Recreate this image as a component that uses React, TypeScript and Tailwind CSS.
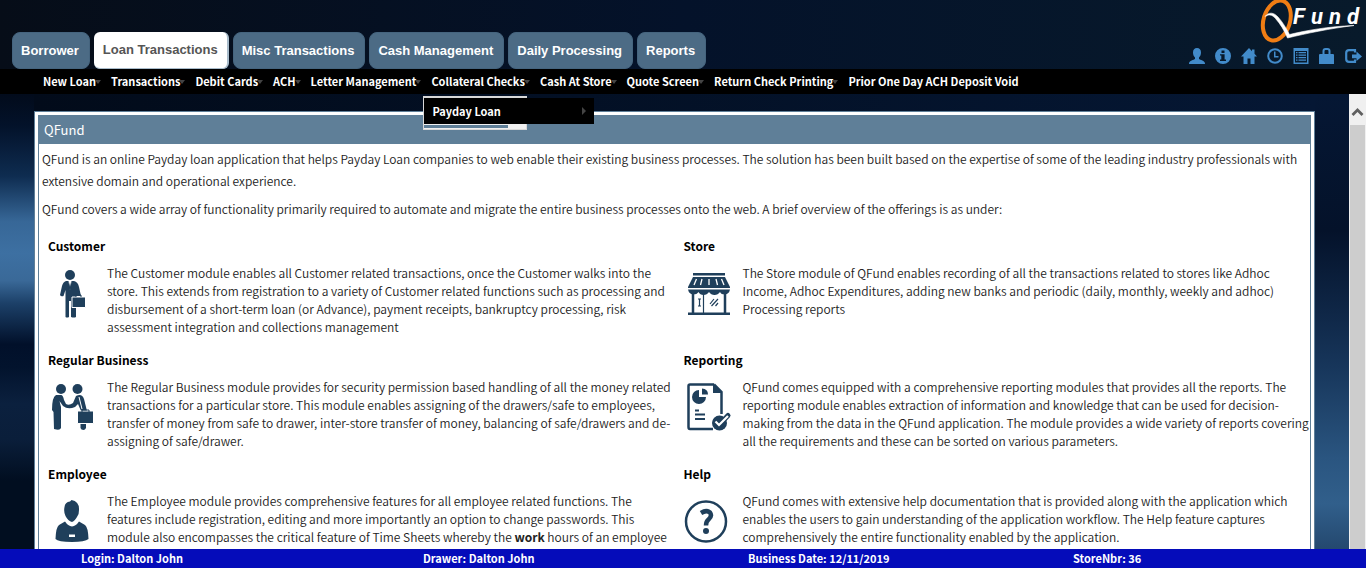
import React from "react";

const INK = "#1f3f5b";

const tabs = ["Borrower", "Loan Transactions", "Misc Transactions", "Cash Management", "Daily Processing", "Reports"];

const menu = [
  "New Loan",
  "Transactions",
  "Debit Cards",
  "ACH",
  "Letter Management",
  "Collateral Checks",
  "Cash At Store",
  "Quote Screen",
  "Return Check Printing",
  "Prior One Day ACH Deposit Void",
];

function Logo() {
  return (
    <svg width="106" height="44" viewBox="0 0 106 44" role="img" aria-label="QFund">
      <ellipse cx="16.800" cy="20.500" rx="13.200" ry="20.500" transform="rotate(17 16.800 20.500)" fill="none" stroke="#f07d14" strokeWidth="4" />
      <path d="M5 16.500C9 11.500 14 12.500 18 17C23 22.500 26 28 29.500 34.500C46 30.500 68 26.500 94 25.500C70 28.500 46 33.500 27.500 38C24.500 31 20.500 24 15.500 18.500C12 14.500 9 14 5 16.500Z" fill="#fff" stroke="#fff" strokeWidth="0.600" />
      <g fill="#fff" fontSize="22" fontWeight="700" fontStyle="italic" fontFamily="Roboto,sans-serif">
        <text x="33" y="24">F</text>
        <text x="51" y="24">u</text>
        <text x="69" y="24">n</text>
        <text x="87" y="24">d</text>
      </g>
    </svg>
  );
}

const tools: { name: string; art: React.ReactNode }[] = [
  { name: "Profile", art: <path d="M8 0C5.500 0 4 1.600 4 4.400C4 6.500 4.800 8.300 6 9.400V11C5 12 0 12.500 0 15.500V16H16V15.500C16 12.500 11 12 10 11V9.400C11.200 8.300 12 6.500 12 4.400C12 1.600 10.500 0 8 0Z" /> },
  { name: "Information", art: <path fillRule="evenodd" d="M8 0A8 8 0 1 1 8 16A8 8 0 0 1 8 0ZM6.500 2.500V5H9.500V2.500ZM5 6.200V7.500H6.300V11.500H5V13H11V11.500H9.600V6.200Z" /> },
  { name: "Home", art: <path d="M8 0L0 8.500H2.500V16H6.500V10.500H9.500V16H13.500V8.500H16L13.500 5.700V1.500H11V3.200Z" /> },
  { name: "Time", art: <><circle cx="8" cy="8" r="6.800" fill="none" stroke="currentColor" strokeWidth="2" /><path d="M7 3.500H8.500V8H11.500V9.500H7Z" /></> },
  { name: "List", art: <path fillRule="evenodd" d="M0.500 0H15.500V16H0.500ZM2 3V14.500H14V3ZM3 4H4.500V5.300H3ZM5.500 4H13V5.300H5.500ZM3 6.500H4.500V7.800H3ZM5.500 6.500H13V7.800H5.500ZM3 9H4.500V10.300H3ZM5.500 9H13V10.300H5.500ZM3 11.500H4.500V12.800H3ZM5.500 11.500H13V12.800H5.500Z" /> },
  { name: "Lock", art: <path fillRule="evenodd" d="M3.500 6V3Q3.500 0 6.500 0H8.500Q11.500 0 11.500 3V6H14Q15 6 15 7V16H0V7Q0 6 1 6ZM5.500 6H9.500V3.200Q9.500 2 8.500 2H6.500Q5.500 2 5.500 3.200Z" /> },
  { name: "Log out", art: <><path d="M10 4.500V2.200H4Q1.200 2.200 1.200 5V11Q1.200 13.800 4 13.800H10V11.500" fill="none" stroke="currentColor" strokeWidth="2.200" /><path d="M7 6.500H11.500V3.500L17 8.500L11.500 13V10.300H7Z" /></> },
];

function CustomerArt() {
  return (
    <svg width="48" height="48" viewBox="0 -1 48 48" overflow="visible" fill={INK} aria-hidden="true">
      <circle cx="22" cy="5" r="5" />
      <path d="M18 11H26Q30 12 31 17L33 26H28V47Q26 48 23 47V31H21V47Q19 48 17.500 47V20L15.500 26Q13 27 12 25L14 16Q15 12 18 11Z" />
      <path d="M20.500 11L22 20L23.500 11Z" fill="#fff" />
      <path d="M22 12L20.800 18L22 20.500L23.200 18Z" />
      <path d="M24 27H37.500V37.500H24Z" stroke="#fff" strokeWidth="1" />
      <path d="M28 27V25H33V27" fill="none" stroke={INK} strokeWidth="1" />
    </svg>
  );
}

function BusinessArt() {
  return (
    <svg width="48" height="48" viewBox="0 -1 48 48" fill={INK} aria-hidden="true">
      <circle cx="13" cy="5" r="5" />
      <circle cx="29.500" cy="5" r="5" />
      <path d="M8 11H13Q15 11 16 16L18 20Q21 22 25 19L28 12Q34 9 36 15L39 27H33L30 20L27 23Q20 26 15 22L11.500 17L13 23V44Q12 47 6 45L5.500 28L4 26Q4 13 8 11Z" />
      <path d="M31 13L34 25" stroke="#fff" strokeWidth="1" />
      <path d="M29.500 27H45.500V39.500H29.500Z" stroke="#fff" strokeWidth="1" />
      <path d="M34 28V26H41V28" fill="none" stroke={INK} />
      <path d="M32.500 40H38V44Q37 46 35.500 46Q33 46 32.500 44Z" />
    </svg>
  );
}

function EmployeeArt() {
  return (
    <svg width="48" height="48" viewBox="0 -3 48 48" fill={INK} aria-hidden="true">
      <path d="M23.500 0Q31.500 1.500 31 10Q31 14 29.500 16Q27 21 24 22Q20 21 17.500 16Q15.500 12 16.500 7Q17 2 22 1.500Z" />
      <path d="M17 21.500Q20 26 24 26.500Q28 26 31 21.500L37 25Q40 27 40.500 39Q37 42 24 42Q10 42 7.500 39Q8 27 11 25Z" />
      <path d="M21 34.500H27V37H21Z" fill="#fff" />
    </svg>
  );
}

function StoreArt() {
  return (
    <svg width="48" height="48" viewBox="0 -1 48 48" fill={INK} aria-hidden="true">
      <path d="M9 3H41V5.500H9Z" />
      <path d="M9 7H41L46 17V18H4V17Z" />
      <path d="M12.500 9L10 15M18 9L16.500 15M25 9V15M32 9L33.500 15M37.500 9L40 15" stroke="#fff" strokeWidth="1.300" />
      <path d="M4 19.500H46Q45 24 41 24.500Q37 24.500 36 22Q34 25 30.500 25Q27 25 25 22Q23 25 19.500 25Q16 25 14.500 22Q13 24.500 9 24.500Q5 24 4 19.500Z" />
      <path d="M9 24V43M41 24V43" stroke={INK} strokeWidth="2.500" />
      <path d="M19.500 24V43M14 29H17M15.500 29V36M14 36H17M26 34L30 29M27.500 36L34 29M31.500 36L34 33" stroke={INK} strokeWidth="1.200" fill="none" />
      <path d="M4 42.500H46V45H4Z" />
    </svg>
  );
}

function ReportArt() {
  return (
    <svg width="48" height="48" viewBox="0 0 48 48" fill={INK} aria-hidden="true">
      <path d="M30 1.500H6Q4.500 1.500 4.500 3V44Q4.500 46 6 46H29M30 1.500L37.500 9V31" fill="none" stroke={INK} strokeWidth="2.500" />
      <path d="M29 1V10H38Z" />
      <path d="M15 7V14H22A7 7 0 1 1 15 7Z" />
      <path d="M18 5.500V11.500H24Q24 6 18 5.500Z" />
      <path d="M11 27.500H15M11 31.500H21M11 36H21" stroke={INK} strokeWidth="2" />
      <circle cx="35.500" cy="40" r="7.500" />
      <path d="M31.500 38.500L35 42L44 32.500" fill="none" stroke={INK} strokeWidth="5" strokeLinecap="round" />
      <path d="M31.500 38.500L35 42L44 33" fill="none" stroke="#fff" strokeWidth="2.200" />
    </svg>
  );
}

function HelpArt() {
  return (
    <svg width="48" height="48" viewBox="0 -2 48 48" aria-hidden="true">
      <circle cx="22" cy="22.500" r="20" fill="none" stroke={INK} strokeWidth="2.500" />
      <path d="M17 14Q22.500 10.500 26 13.500Q28.500 17 24.500 20.500Q22 22.500 22 26.500" fill="none" stroke={INK} strokeWidth="4.500" />
      <circle cx="22" cy="32" r="3" fill={INK} />
    </svg>
  );
}

const modules: { title: string; art: React.ReactNode; text: React.ReactNode }[] = [
  { title: "Customer", art: <CustomerArt />, text: "The Customer module enables all Customer related transactions, once the Customer walks into the store. This extends from registration to a variety of Customer related functions such as processing and disbursement of a short-term loan (or Advance), payment receipts, bankruptcy processing, risk assessment integration and collections management" },
  { title: "Store", art: <StoreArt />, text: "The Store module of QFund enables recording of all the transactions related to stores like Adhoc Income, Adhoc Expenditures, adding new banks and periodic (daily, monthly, weekly and adhoc) Processing reports" },
  { title: "Regular Business", art: <BusinessArt />, text: "The Regular Business module provides for security permission based handling of all the money related transactions for a particular store. This module enables assigning of the drawers/safe to employees, transfer of money from safe to drawer, inter-store transfer of money, balancing of safe/drawers and de-assigning of safe/drawer." },
  { title: "Reporting", art: <ReportArt />, text: "QFund comes equipped with a comprehensive reporting modules that provides all the reports. The reporting module enables extraction of information and knowledge that can be used for decision-making from the data in the QFund application. The module provides a wide variety of reports covering all the requirements and these can be sorted on various parameters." },
  { title: "Employee", art: <EmployeeArt />, text: <>The Employee module provides comprehensive features for all employee related functions. The features include registration, editing and more importantly an option to change passwords. This module also encompasses the critical feature of Time Sheets whereby the <b className="font-bold">work</b> hours of an employee</> },
  { title: "Help", art: <HelpArt />, text: "QFund comes with extensive help documentation that is provided along with the application which enables the users to gain understanding of the application workflow. The Help feature captures comprehensively the entire functionality enabled by the application." },
];

export default function App() {
  return (
    <div className="flex h-screen flex-col overflow-hidden bg-[#020c1c] font-['Noto_Sans_CJK_SC','Noto_Sans',sans-serif] text-xs text-[#222]">
      <header className="flex h-[69px] shrink-0 items-end justify-between bg-linear-to-r from-[#060d18] via-[#04122a] to-[#081a2b] pl-3">
        <nav aria-label="Sections" className="flex gap-1 font-['Liberation_Sans',sans-serif] text-[13px] font-bold">
          {tabs.map((t) => (
            <a key={t} href="#" className={t === "Loan Transactions" ? "h-[37px] rounded-md border-r-2 border-b border-[#a9bccb] bg-white pr-[9px] pl-[9px] leading-9 text-[#555]" : "h-[37px] rounded-lg border border-[#45647e] bg-[#4c6b85] pr-[10px] pl-2 leading-[35px] text-white"}>
              {t}
            </a>
          ))}
        </nav>
        <div className="flex flex-col items-end gap-1 pb-[5px]">
          <Logo />
          <div className="flex gap-[10px] pr-[5px] text-[#428bca]">
            {tools.map((t) => (
              <button key={t.name} type="button" aria-label={t.name} className="block">
                <svg width="16" height="16" viewBox="0 0 16 16" fill="currentColor" overflow="visible">{t.art}</svg>
              </button>
            ))}
          </div>
        </div>
      </header>

      <nav aria-label="Menu" className="flex h-[25px] shrink-0 gap-[15px] bg-black pl-[43px] text-[11px] font-bold leading-[25px] text-white">
        {menu.map((m, i) => (
          <div key={m} className="relative">
            <a href="#" className="whitespace-nowrap">{m}</a>
            {i < menu.length - 1 && (
              <span className="absolute top-[11px] -right-[5px] border-x-[3px] border-t-4 border-x-transparent border-t-[#444]" />
            )}
            {m === "Collateral Checks" && (
              <div className="absolute top-[27px] -left-[8px] z-10 h-[34px] w-[104px] border border-t-2 border-[#d8d8d8] bg-[#f0f0f0]">
                <a href="#" className="flex h-[26px] w-[170px] items-center justify-between bg-black px-2">
                  Payday Loan
                  <span className="border-y-4 border-l-4 border-y-transparent border-l-[#444]" />
                </a>
                <div className="mt-px h-[3px] w-[84px] bg-[#5f7f98]" />
              </div>
            )}
          </div>
        ))}
      </nav>

      <div className="flex min-h-0 flex-1">
        <div className="w-[34px] shrink-0 bg-[linear-gradient(to_bottom,#020b1b_0%,#03122a_7%,#0e2c50_18%,#376797_28%,#3d70a2_35%,#3a6998_41%,#1c4068_46%,#01102a_55%,#02132d_60%,#0b203e_68%,#0a1e3a_76%,#010e20_85%,#010e20_100%)]" />
        <main className="min-w-0 flex-1 overflow-hidden bg-linear-to-r from-[#020b1a] to-[#051734] pt-[17px]">
          <section className="border border-[#5f7f98] bg-white p-[3px] pb-0">
            <div className="border border-[#5f7f98]">
              <h1 className="h-7 bg-[#5f7f98] px-[5px] text-[13px] leading-7 text-white">QFund</h1>
              <div className="pt-1 pl-[3px] leading-[22px] font-[350]">
                <p>QFund is an online Payday loan application that helps Payday Loan companies to web enable their existing business processes. The solution has been built based on the expertise of some of the leading industry professionals with extensive domain and operational experience.</p>
                <p className="mt-[6px]">QFund covers a wide array of functionality primarily required to automate and migrate the entire business processes onto the web. A brief overview of the offerings is as under:</p>
              </div>
              <div className="grid grid-cols-2 pt-[17px]">
                {modules.map((m) => (
                  <article key={m.title} className="h-[114px] pl-[9px] leading-[18px]">
                    <h2 className="font-bold text-black">{m.title}</h2>
                    <div className="mt-[9px] flex gap-[11px]">
                      <div className="w-12 shrink-0 pt-[5px]">{m.art}</div>
                      <p className="font-[350]">{m.text}</p>
                    </div>
                  </article>
                ))}
              </div>
            </div>
          </section>
        </main>
        <div className="w-[34px] shrink-0 bg-[linear-gradient(to_bottom,#051734_0%,#04122a_30%,#10294a_50%,#17365b_60%,#2a5580_80%,#315f8b_90%,#24486f_100%)]" />
        <div className="flex w-[17px] shrink-0 flex-col bg-[#f0f0f0]">
          <svg width="17" height="31" viewBox="0 0 17 31" aria-hidden="true"><path d="M3.500 21L8.500 16L13.500 21" fill="none" stroke="#606060" strokeWidth="2.800" /></svg>
          <div className="mx-px flex-1 bg-[#cdcdcd]" />
        </div>
      </div>

      <footer className="grid h-[19px] shrink-0 grid-cols-[342px_325px_325px_1fr] bg-[#050cba] pl-[81px] text-[11px] font-bold leading-[19px] text-white">
        <span>Login: Dalton John</span>
        <span>Drawer: Dalton John</span>
        <span>Business Date: 12/11/2019</span>
        <span>StoreNbr: 36</span>
      </footer>
    </div>
  );
}
